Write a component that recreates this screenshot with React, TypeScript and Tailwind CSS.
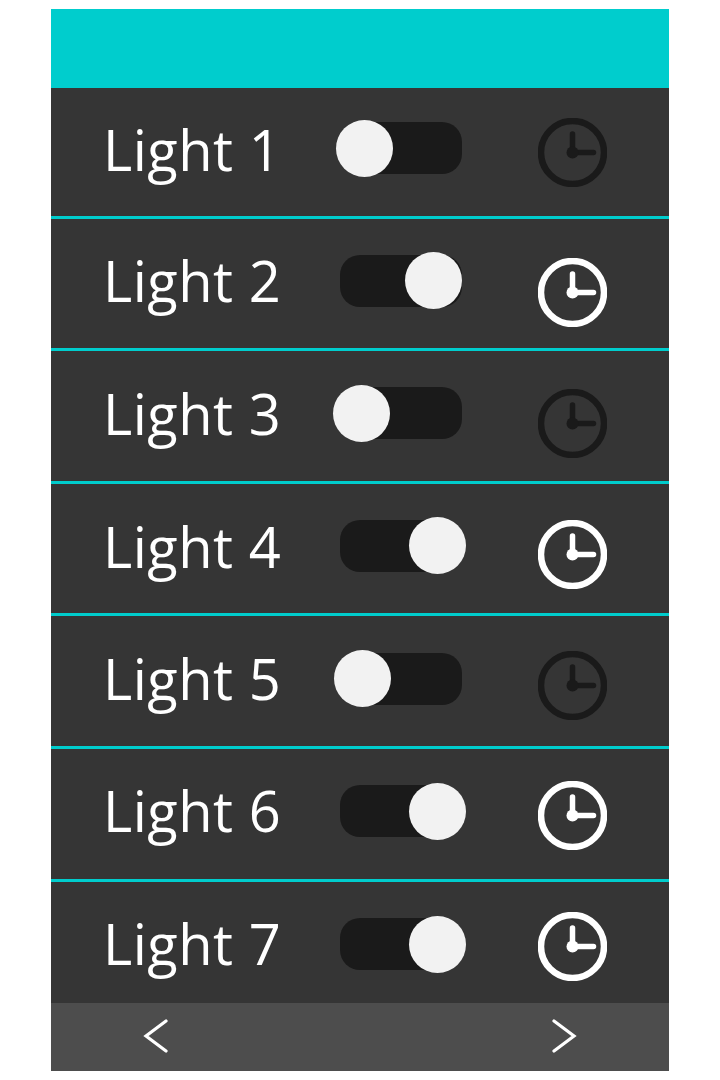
const rows = [
  { name: 'Light 1', row: 'h-[131px]', text: 'mt-[23px]', track: 'mt-[34px]', knob: 'left-[-4px] top-[-2px]', clock: 'mt-[30px]', clockColor: 'text-[#1a1a1a]' },
  { name: 'Light 2', row: 'h-[132px]', text: 'mt-[23px]', track: 'mt-[36px]', knob: 'left-[65px] top-[-3px]', clock: 'mt-[39px]', clockColor: 'text-white' },
  { name: 'Light 3', row: 'h-[133px]', text: 'mt-[24px]', track: 'mt-[36px]', knob: 'left-[-7px] top-[-2px]', clock: 'mt-[38px]', clockColor: 'text-[#1a1a1a]' },
  { name: 'Light 4', row: 'h-[132px]', text: 'mt-[24px]', track: 'mt-[36px]', knob: 'left-[69px] top-[-3px]', clock: 'mt-[36px]', clockColor: 'text-white' },
  { name: 'Light 5', row: 'h-[133px]', text: 'mt-[24px]', track: 'mt-[37px]', knob: 'left-[-6px] top-[-3px]', clock: 'mt-[35px]', clockColor: 'text-[#1a1a1a]' },
  { name: 'Light 6', row: 'h-[133px]', text: 'mt-[23px]', track: 'mt-[36px]', knob: 'left-[69px] top-[-2px]', clock: 'mt-[32px]', clockColor: 'text-white' },
  { name: 'Light 7', row: 'h-[121px]', text: 'mt-[23px]', track: 'mt-[36px]', knob: 'left-[69px] top-[-2px]', clock: 'mt-[30px]', clockColor: 'text-white' },
];

function Clock({ className }: { className: string }) {
  return (
    <svg viewBox="0 0 69 69" className={`h-[69px] w-[69px] ${className}`} fill="none" stroke="currentColor">
      <circle cx="34.5" cy="34.5" r="31.5" strokeWidth="6.5" />
      <path d="M34.5 16V34.5H55.5" strokeWidth="5.5" strokeLinecap="round" />
      <circle cx="34.5" cy="34.5" r="6" fill="currentColor" stroke="none" />
    </svg>
  );
}

export default function App() {
  return (
    <div className="h-[1080px] w-[720px] bg-white pl-[51px] pt-[9px]">
      <div className="w-[618px]">
        <div className="h-[79px] bg-[#00cdcd]" />
        {rows.map((r, i) => (
          <div
            key={r.name}
            className={`grid grid-cols-[289px_122px_1fr] bg-[#353535] ${r.row} ${i < 6 ? 'border-b-[3px] border-[#00cdcd]' : ''}`}
          >
            <div className={`pl-[52px] font-['Open_Sans',sans-serif] text-[56px] leading-[76px] tracking-[0.5px] text-white ${r.text}`}>
              {r.name}
            </div>
            <div className={`relative h-[52px] rounded-[20px] bg-[#1a1a1a] ${r.track}`}>
              <div className={`absolute h-[57px] w-[57px] rounded-full bg-[#f2f2f2] ${r.knob}`} />
            </div>
            <div className={`pl-[76px] ${r.clock}`}>
              <Clock className={r.clockColor} />
            </div>
          </div>
        ))}
        <div className="flex h-[68px] items-center justify-between bg-[#4d4d4d] px-[92px] text-white">
          <svg viewBox="0 0 26 36" className="h-[36px] w-[26px]" fill="none" stroke="currentColor" strokeWidth="3.2" strokeLinecap="round">
            <path d="M23 2L3 17L23 32" />
          </svg>
          <svg viewBox="0 0 26 36" className="h-[36px] w-[26px]" fill="none" stroke="currentColor" strokeWidth="3.2" strokeLinecap="round">
            <path d="M3 2L23 17L3 32" />
          </svg>
        </div>
      </div>
    </div>
  );
}
